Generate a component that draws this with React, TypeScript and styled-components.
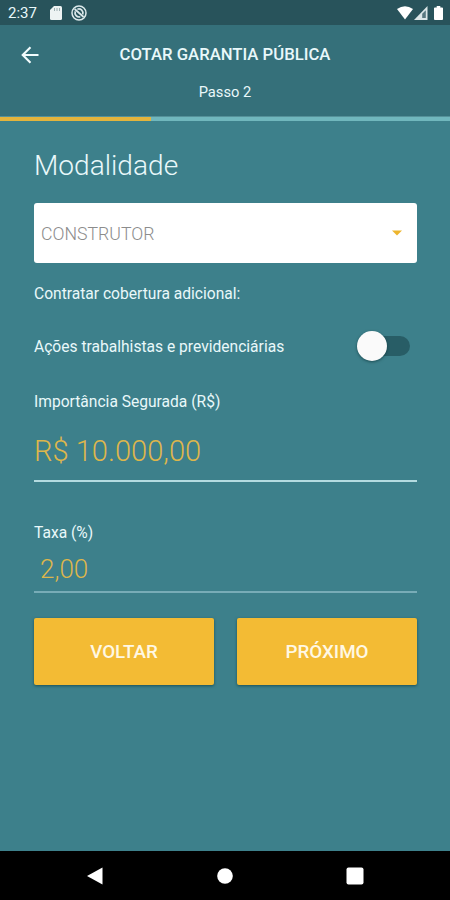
import React from "react";
import styled, { createGlobalStyle } from "styled-components";

const GlobalStyle = createGlobalStyle`
  * { box-sizing: border-box; }
  body { margin: 0; background: #3d808b; }
`;

const Screen = styled.div`
  width: 450px;
  height: 900px;
  display: flex;
  flex-direction: column;
  overflow: hidden;
  background: #3d808b;
  color: #e9f8fa;
  font-family: Roboto, sans-serif;
`;

const StatusBar = styled.div`
  height: 25px;
  flex: none;
  display: flex;
  align-items: center;
  justify-content: space-between;
  padding: 1px 7px 0 8px;
  background: #28535b;
`;

const StatusGroup = styled.div<{ $gap: number }>`
  display: flex;
  align-items: center;
  gap: ${(p) => p.$gap}px;
`;

const Clock = styled.span`
  width: 33px;
  font-size: 15px;
  line-height: 24px;
  white-space: nowrap;
`;

const Header = styled.header`
  height: 91px;
  flex: none;
  background: #35707a;
`;

const TitleRow = styled.div`
  height: 59px;
  display: grid;
  grid-template-columns: 60px 1fr 60px;
  align-items: center;
`;

const BackButton = styled.button`
  display: flex;
  justify-content: center;
  padding: 0;
  border: 0;
  background: none;
`;

const Title = styled.h1`
  margin: 0;
  text-align: center;
  font-size: 16.7px;
  font-weight: 500;
  line-height: 24px;
  white-space: nowrap;
`;

const Step = styled.div`
  text-align: center;
  font-size: 14.7px;
  line-height: 17px;
`;

const Progress = styled.div`
  height: 5px;
  flex: none;
  background: #70b7bd;
  border-top: 1px solid #559199;
`;

const ProgressFill = styled.div`
  width: 151px;
  height: 4px;
  background: #e4b43c;
`;

const Form = styled.main`
  flex: 1;
  display: flex;
  flex-direction: column;
  padding: 25px 33px 0 34px;
`;

const Heading = styled.h2`
  margin: 0 0 17px;
  font-size: 28.1px;
  font-weight: 300;
  line-height: 40px;
`;

const Select = styled.div`
  height: 60px;
  display: flex;
  align-items: center;
  justify-content: space-between;
  padding: 0 15px 0 7px;
  border-radius: 3px;
  background: #fff;
  color: #8c8c8c;
  font-size: 17.7px;
  font-weight: 300;
`;

const SelectText = styled.span`
  padding-top: 2px;
`;

const Label = styled.div<{ $top?: number }>`
  margin-top: ${(p) => p.$top ?? 0}px;
  padding-top: 2px;
  font-size: 15.6px;
  line-height: 18px;
  white-space: nowrap;
`;

const SwitchRow = styled.div`
  height: 30px;
  margin-top: 28px;
  display: flex;
  align-items: center;
  justify-content: space-between;
  padding-right: 7px;
`;

const Switch = styled.div`
  width: 51px;
  height: 20px;
  display: flex;
  align-items: center;
  border-radius: 10px;
  background: linear-gradient(to right, transparent 10px, #285d66 10px);
`;

const Thumb = styled.div`
  width: 30px;
  height: 30px;
  margin-left: -2px;
  flex: none;
  border-radius: 50%;
  background: #fafafa;
  box-shadow: 0 1px 3px rgba(0, 35, 40, 0.55);
`;

const Value = styled.div<{ $large?: boolean }>`
  height: ${(p) => (p.$large ? 71 : 51)}px;
  padding: ${(p) => (p.$large ? "20px 0 0" : "7px 0 0 6px")};
  border-bottom: 2px solid ${(p) => (p.$large ? "#b4dbe0" : "#78acb7")};
  color: #ddb64c;
  font-size: ${(p) => (p.$large ? 29.1 : 26)}px;
  font-weight: 300;
  line-height: 40px;
`;

const Actions = styled.div`
  display: grid;
  grid-template-columns: 1fr 1fr;
  gap: 23px;
  margin-top: 25px;
`;

const ActionButton = styled.button`
  height: 67px;
  padding: 0;
  border: 0;
  border-radius: 2px;
  background: #f3bb34;
  box-shadow: 0 1px 3px rgba(0, 50, 55, 0.6);
  color: #fff8e4;
  font-family: inherit;
  font-size: 18.8px;
  font-weight: 500;
`;

const NavBar = styled.nav`
  height: 49px;
  flex: none;
  display: grid;
  grid-template-columns: 130px 130px 130px;
  justify-content: center;
  align-items: center;
  justify-items: center;
  background: #000;
`;

const SdCard = () => (
  <svg width="12" height="14" viewBox="0 0 12 14">
    <path d="M4 0h6.5Q12 0 12 1.5v11Q12 14 10.5 14h-9Q0 14 0 12.5V4z" fill="#edf3f3" />
    <path d="M4.5 2v3M7 2v3M9.5 2v3" stroke="#9eb0b3" strokeWidth="1" />
  </svg>
);

const SyncDisabled = () => (
  <svg width="16" height="16" viewBox="0 0 16 16" fill="none" stroke="#dce9eb">
    <circle cx="8" cy="8" r="7" strokeWidth="1.5" />
    <path d="M3.6 4 12.6 12M4.3 6.4a4.1 4.1 0 0 0 5 5.4M6.4 4.2a4.1 4.1 0 0 1 5.3 5.2" strokeWidth="1.7" />
  </svg>
);

const Wifi = () => (
  <svg width="16" height="14" viewBox="0 0 16 14">
    <path d="M0 3Q8-2.5 16 3L8 13.5z" fill="#fff" />
  </svg>
);

const Signal = () => (
  <svg width="14" height="14" viewBox="0 0 14 14">
    <path d="M13.5 0v14H0z" fill="#dce7e8" />
    <path d="M11.8 4.2v7.9H8.2V7.8z" fill="#597980" />
  </svg>
);

const Battery = () => (
  <svg width="9" height="14" viewBox="0 0 10 15" preserveAspectRatio="none">
    <path d="M3 0h4v1.5h2Q10 1.5 10 2.5V14q0 1-1 1H1q-1 0-1-1V2.5q0-1 1-1h2z" fill="#fff" />
  </svg>
);

export default function App() {
  return (
    <Screen>
      <GlobalStyle />
      <StatusBar>
        <StatusGroup $gap={9}>
          <Clock>2:37</Clock>
          <SdCard />
          <SyncDisabled />
        </StatusGroup>
        <StatusGroup $gap={6}>
          <StatusGroup $gap={1}>
            <Wifi />
            <Signal />
          </StatusGroup>
          <Battery />
        </StatusGroup>
      </StatusBar>
      <Header>
        <TitleRow>
          <BackButton aria-label="Voltar">
            <svg width="18" height="18" viewBox="0 0 18 18" fill="none" stroke="#f2fcfd" strokeWidth="2.1">
              <path d="M17.5 9H2M9.5 1.2 1.7 9l7.8 7.8" />
            </svg>
          </BackButton>
          <Title>COTAR GARANTIA PÚBLICA</Title>
        </TitleRow>
        <Step>Passo 2</Step>
      </Header>
      <Progress>
        <ProgressFill />
      </Progress>
      <Form>
        <Heading>Modalidade</Heading>
        <Select>
          <SelectText>CONSTRUTOR</SelectText>
          <svg width="10" height="6" viewBox="0 0 10 6">
            <path d="M0 .5h10l-5 5z" fill="#edb52e" />
          </svg>
        </Select>
        <Label $top={20}>Contratar cobertura adicional:</Label>
        <SwitchRow>
          <Label>Ações trabalhistas e previdenciárias</Label>
          <Switch role="switch" aria-checked={false}>
            <Thumb />
          </Switch>
        </SwitchRow>
        <Label $top={30}>Importância Segurada (R$)</Label>
        <Value $large>R$ 10.000,00</Value>
        <Label $top={40}>Taxa (%)</Label>
        <Value>2,00</Value>
        <Actions>
          <ActionButton>VOLTAR</ActionButton>
          <ActionButton>PRÓXIMO</ActionButton>
        </Actions>
      </Form>
      <NavBar>
        <svg width="16" height="18" viewBox="0 0 16 18">
          <path d="M0 9 15.5.5v17z" fill="#fff" />
        </svg>
        <svg width="16" height="16" viewBox="0 0 16 16">
          <circle cx="8" cy="8" r="7.8" fill="#fff" />
        </svg>
        <svg width="18" height="18" viewBox="0 0 18 18">
          <rect x=".5" y=".5" width="17" height="17" rx="2" fill="#fff" />
        </svg>
      </NavBar>
    </Screen>
  );
}
